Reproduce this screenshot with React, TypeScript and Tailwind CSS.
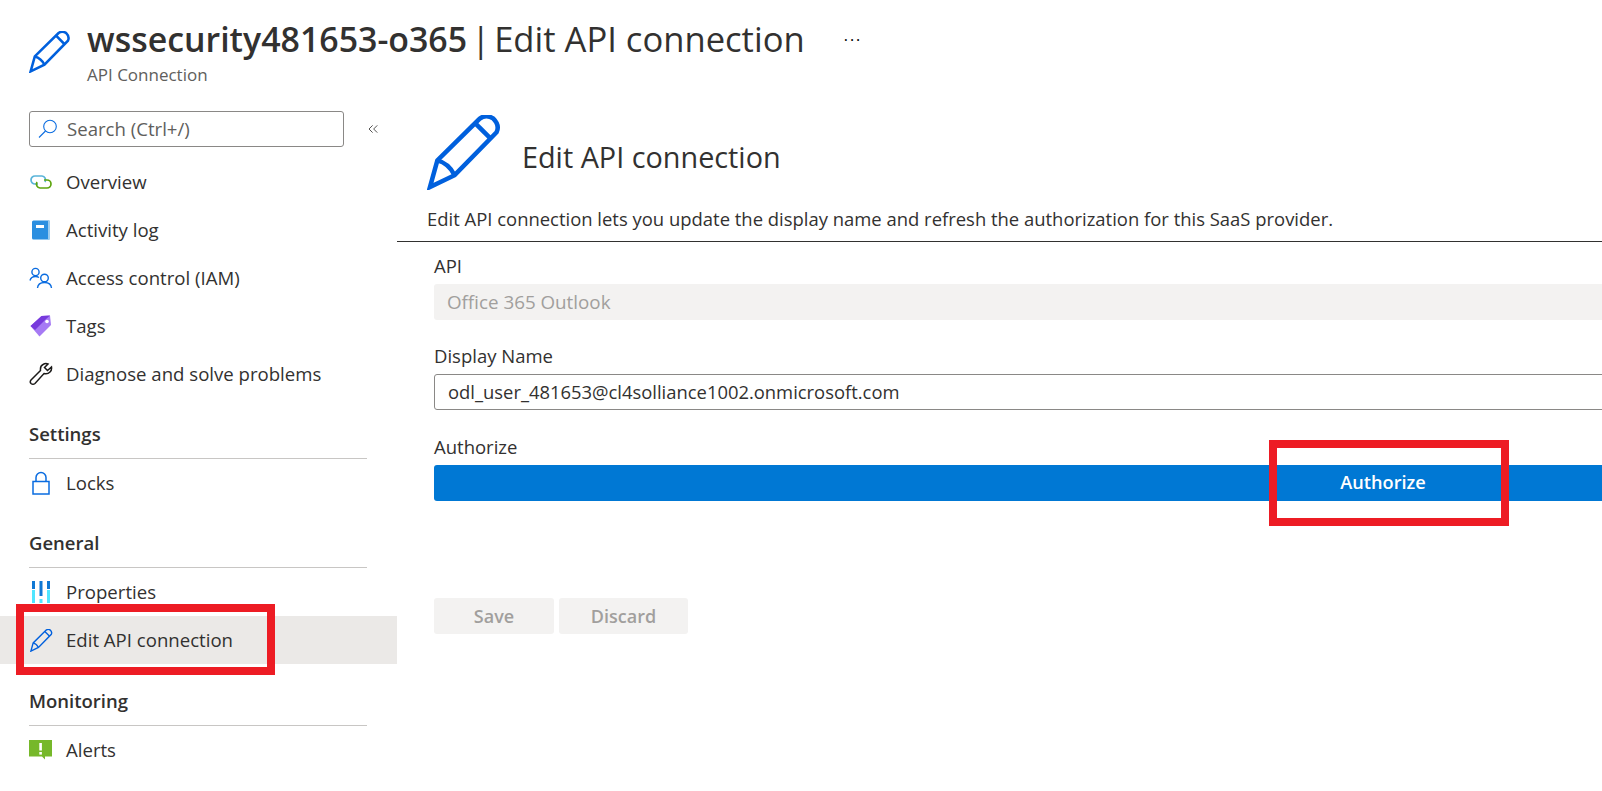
import { ChevronsLeft } from "lucide-react";
import type { ReactNode } from "react";

const PencilIcon = ({ className }: { className: string }) => (
  <svg viewBox="0 0 76 76" className={className} fill="none" stroke="#0060dd" strokeWidth="4.6">
    <path d="M3 73 L10.5 46 L53.5 3.6 Q60 -1 67 3.5 Q74 10.5 70.5 17.5 L28 61 Z" />
    <path d="M49 8.5 L64 23.5" />
    <path d="M10.5 46 Q22 49 28 61" />
  </svg>
);

const SearchIcon = () => (
  <svg viewBox="0 0 20 20" className="w-[20px] h-[20px] shrink-0" fill="none" stroke="#0a6ce0" strokeWidth="1.1">
    <circle cx="12" cy="7.5" r="6.3" />
    <path d="M7.5 12 L1 18.5" />
  </svg>
);

const LinkIcon = () => (
  <svg viewBox="0 0 24 16" className="w-[24px] h-[16px]" fill="none" strokeWidth="1.7">
    <path d="M9 10 H6 a4 4 0 0 1 0 -8 H13 a4 4 0 0 1 3 6" stroke="#59b4d9" />
    <path d="M15 6 H18 a4 4 0 0 1 0 8 H11 a4 4 0 0 1 -3 -6" stroke="#5ea50f" />
  </svg>
);

const BookIcon = () => (
  <svg viewBox="0 0 20 20" className="w-[20px] h-[20px]">
    <rect x="1" y="0.5" width="18" height="19" rx="1.5" fill="#2b8fe0" />
    <rect x="17" y="0.5" width="2" height="19" fill="#9ccbee" />
    <rect x="5" y="5" width="8" height="3" fill="#fff" />
  </svg>
);

const PeopleIcon = () => (
  <svg viewBox="0 0 24 22" className="w-[24px] h-[22px]" fill="none" stroke="#0a6ce0" strokeWidth="1.4">
    <circle cx="6.5" cy="5" r="3.6" />
    <path d="M1 13.5 Q2 9.5 6.5 9.5 Q8.5 9.5 10 10.5" />
    <circle cx="15.5" cy="11" r="3.8" />
    <path d="M8.5 21 Q9 15.5 15.5 15.5 Q22 15.5 22.5 21" />
  </svg>
);

const TagIcon = () => (
  <svg viewBox="0 0 22 22" className="w-[22px] h-[22px]">
    <path d="M0.5 11 L11.5 1 L20 0.5 L21 10 L9.5 21.5 Z" fill="#a67af4" />
    <path d="M0.5 11 L11.5 1 L20 0.5 L15 5 L5 15 Z" fill="#773adc" />
    <circle cx="17" cy="6.5" r="1.8" fill="#fff" />
  </svg>
);

const WrenchIcon = () => (
  <svg viewBox="0 0 24 24" className="w-[24px] h-[24px]" fill="none" stroke="#1b1a19" strokeWidth="1.5">
    <path d="M2 18 L11.5 8.5 Q11 4 14 2.5 Q16.5 1 19 2 L15.5 5.5 L18.5 8.5 L22.5 5 Q23 8 21 10 Q18.5 12.5 15 11.5 L6 21.5 Q4 23 2 21.5 Q0.5 20 2 18 Z" />
  </svg>
);

const LockIcon = () => (
  <svg viewBox="0 0 20 24" className="w-[20px] h-[24px]" fill="none" stroke="#0a6ce0" strokeWidth="1.5">
    <rect x="2" y="10.5" width="16" height="12.5" />
    <path d="M5 10.5 V6.5 a5 5 0 0 1 10 0 V10.5" />
  </svg>
);

const BarsIcon = () => (
  <svg viewBox="0 0 18 22" className="w-[18px] h-[22px]">
    <rect x="0" y="0" width="3" height="8" fill="#0f78d4" />
    <rect x="0" y="9" width="3" height="13" fill="#50e6ff" />
    <rect x="7.5" y="0" width="3" height="15" fill="#0f78d4" />
    <rect x="7.5" y="18" width="3" height="4" fill="#50e6ff" />
    <rect x="15" y="0" width="3" height="8" fill="#0f78d4" />
    <rect x="15" y="9" width="3" height="13" fill="#50e6ff" />
  </svg>
);

const AlertIcon = () => (
  <svg viewBox="0 0 24 20" className="w-[24px] h-[20px]">
    <path d="M0 0 H23 V16.5 H16 V19.5 L13 16.5 H0 Z" fill="#76b82a" />
    <rect x="10.3" y="3" width="2.6" height="7.5" fill="#fff" />
    <rect x="10.3" y="12" width="2.6" height="2.6" fill="#fff" />
  </svg>
);

const NavItem = ({ icon, label, active }: { icon: ReactNode; label: string; active?: boolean }) => (
  <div className={`flex items-center h-[48px] pl-[29px] ${active ? "bg-[#ebe9e7]" : ""}`}>
    <div className="w-[24px] flex justify-center shrink-0">{icon}</div>
    <span className="ml-[13px] text-[18.6px]">{label}</span>
  </div>
);

const SectionTitle = ({ title }: { title: string }) => (
  <div className="mx-[29px] w-[338px] h-[37px] border-b border-[#c8c6c4] font-semibold text-[18.5px] leading-[24px]">
    {title}
  </div>
);

export default function App() {
  return (
    <div className="relative w-[1602px] h-[791px] overflow-hidden bg-white text-[#323130] font-['Open_Sans','Noto_Sans',sans-serif]">
      <header className="flex h-[100px] pl-[29px] pt-[19px]">
        <PencilIcon className="w-[42px] h-[42px] mt-[12px]" />
        <div className="ml-[16px]">
          <div className="flex items-center">
            <h1 className="flex items-center leading-[40px] whitespace-nowrap">
              <span className="font-semibold text-[33.9px]">wssecurity481653-o365</span>
              <span className="ml-[4px] text-[34.6px]">|</span>
              <span className="ml-[4px] text-[34.6px]">Edit API connection</span>
            </h1>
            <span className="ml-[39px] text-[16px] leading-none mt-[2px] tracking-[2px] text-black">···</span>
          </div>
          <div className="text-[17px] leading-[22px] text-[#605e5c] mt-[5px]">API Connection</div>
        </div>
      </header>

      <div className="flex">
        <aside className="w-[397px] shrink-0 pt-[11px]">
          <div className="flex items-center pl-[29px]">
            <div className="flex items-center w-[315px] h-[36px] border border-[#8a8886] rounded-[3px] pl-[8px]">
              <SearchIcon />
              <span className="ml-[9px] text-[18.6px] text-[#605e5c]">Search (Ctrl+/)</span>
            </div>
            <ChevronsLeft className="ml-[21px] w-[16px] h-[16px] text-[#323130]" strokeWidth={1.25} />
          </div>
          <div className="mt-[11px]">
            <NavItem icon={<LinkIcon />} label="Overview" />
            <NavItem icon={<BookIcon />} label="Activity log" />
            <NavItem icon={<PeopleIcon />} label="Access control (IAM)" />
            <NavItem icon={<TagIcon />} label="Tags" />
            <NavItem icon={<WrenchIcon />} label="Diagnose and solve problems" />
          </div>
          <div className="mt-[24px]">
            <SectionTitle title="Settings" />
            <NavItem icon={<LockIcon />} label="Locks" />
          </div>
          <div className="mt-[24px]">
            <SectionTitle title="General" />
            <NavItem icon={<BarsIcon />} label="Properties" />
            <NavItem icon={<PencilIcon className="w-[23px] h-[23px]" />} label="Edit API connection" active />
          </div>
          <div className="mt-[25px]">
            <SectionTitle title="Monitoring" />
            <NavItem icon={<AlertIcon />} label="Alerts" />
          </div>
        </aside>

        <main className="flex-1 min-w-0 pt-[15px]">
          <div className="flex items-center pl-[30px] h-[75px]">
            <PencilIcon className="w-[75px] h-[75px]" />
            <h2 className="ml-[20px] text-[28.8px] mt-[8px]">Edit API connection</h2>
          </div>
          <p className="pl-[30px] text-[18.45px] leading-[24px] mt-[17px] whitespace-nowrap">
            Edit API connection lets you update the display name and refresh the authorization for this SaaS provider.
          </p>
          <div className="mt-[10px] border-t border-[#323130]" />
          <div className="ml-[37px] w-[1898px]">
            <label className="block text-[18.5px] leading-[24px] mt-[12px]">API</label>
            <div className="h-[36px] mt-[6px] pl-[13px] flex items-center bg-[#f3f2f1] rounded-[3px] text-[18.8px] text-[#a19f9d]">
              Office 365 Outlook
            </div>
            <label className="block text-[18.5px] leading-[24px] mt-[24px]">Display Name</label>
            <div className="h-[36px] mt-[6px] pl-[13px] flex items-center border border-[#8a8886] rounded-[3px] text-[18.4px]">
              odl_user_481653@cl4solliance1002.onmicrosoft.com
            </div>
            <label className="block text-[18.5px] leading-[24px] mt-[25px]">Authorize</label>
            <div className="h-[36px] mt-[6px] flex items-center justify-center bg-[#0078d4] rounded-[3px] text-white font-semibold text-[18.2px]">
              Authorize
            </div>
            <div className="flex gap-[5px] mt-[97px]">
              <div className="w-[120px] h-[36px] flex items-center justify-center bg-[#f3f2f1] rounded-[3px] text-[#a19f9d] font-semibold text-[18px]">Save</div>
              <div className="w-[129px] h-[36px] flex items-center justify-center bg-[#f3f2f1] rounded-[3px] text-[#a19f9d] font-semibold text-[18px]">Discard</div>
            </div>
          </div>
        </main>
      </div>

      {/* red callouts drawn over the screenshot */}
      <div className="absolute left-[16px] top-[604px] w-[259px] h-[71px] border-[8px] border-[#ed1c24]" />
      <div className="absolute left-[1269px] top-[440px] w-[240px] h-[86px] border-[8px] border-[#ed1c24]" />
    </div>
  );
}
